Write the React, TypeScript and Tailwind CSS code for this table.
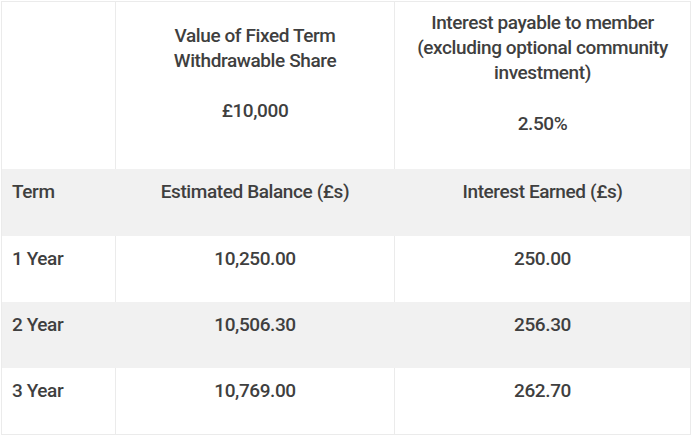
const rows = [
  { term: "1 Year", balance: "10,250.00", interest: "250.00", shaded: false },
  { term: "2 Year", balance: "10,506.30", interest: "256.30", shaded: true },
  { term: "3 Year", balance: "10,769.00", interest: "262.70", shaded: false },
];

function Row({
  term,
  balance,
  interest,
  shaded,
}: {
  term: string;
  balance: string;
  interest: string;
  shaded: boolean;
}) {
  const line = shaded ? "border-[#f1f1f1]" : "border-[#ebebeb]";
  return (
    <div
      className={`flex h-[66px] ${shaded ? "bg-[#f1f1f1]" : "bg-white"}`}
    >
      <div className={`w-[114px] border-r pl-[10px] pt-[10px] ${line}`}>
        {term}
      </div>
      <div className={`w-[279px] border-r pt-[10px] text-center ${line}`}>
        {balance}
      </div>
      <div className="flex-1 pt-[10px] text-center">{interest}</div>
    </div>
  );
}

export default function App() {
  return (
    <div
      className="h-[436px] w-[693px] bg-white pl-px pt-px text-[19px] leading-[25px] font-medium tracking-[-0.4px] text-[#3f3f3f]"
      style={{ fontFamily: "Roboto, 'Liberation Sans', sans-serif" }}
    >
      <div className="w-[690px] border border-[#ebebeb]">
        <div className="flex h-[167px]">
          <div className="w-[114px] border-r border-[#ebebeb]" />
          <div className="flex w-[279px] flex-col items-center justify-center border-r border-[#ebebeb] pb-[25px] text-center">
            <p>Value of Fixed Term</p>
            <p>Withdrawable Share</p>
            <p className="mt-[25px]">£10,000</p>
          </div>
          <div className="flex flex-1 flex-col items-center justify-center pb-[26px] text-center">
            <p>Interest payable to member</p>
            <p>(excluding optional community</p>
            <p>investment)</p>
            <p className="mt-[26px]">2.50%</p>
          </div>
        </div>
        <div className="flex h-[67px] bg-[#f1f1f1]">
          <div className="w-[114px] border-r border-[#f1f1f1] pl-[10px] pt-[10px]">
            Term
          </div>
          <div className="w-[279px] border-r border-[#f1f1f1] pt-[10px] text-center">
            Estimated Balance (£s)
          </div>
          <div className="flex-1 pt-[10px] text-center">Interest Earned (£s)</div>
        </div>
        {rows.map((r) => (
          <Row key={r.term} {...r} />
        ))}
      </div>
    </div>
  );
}
